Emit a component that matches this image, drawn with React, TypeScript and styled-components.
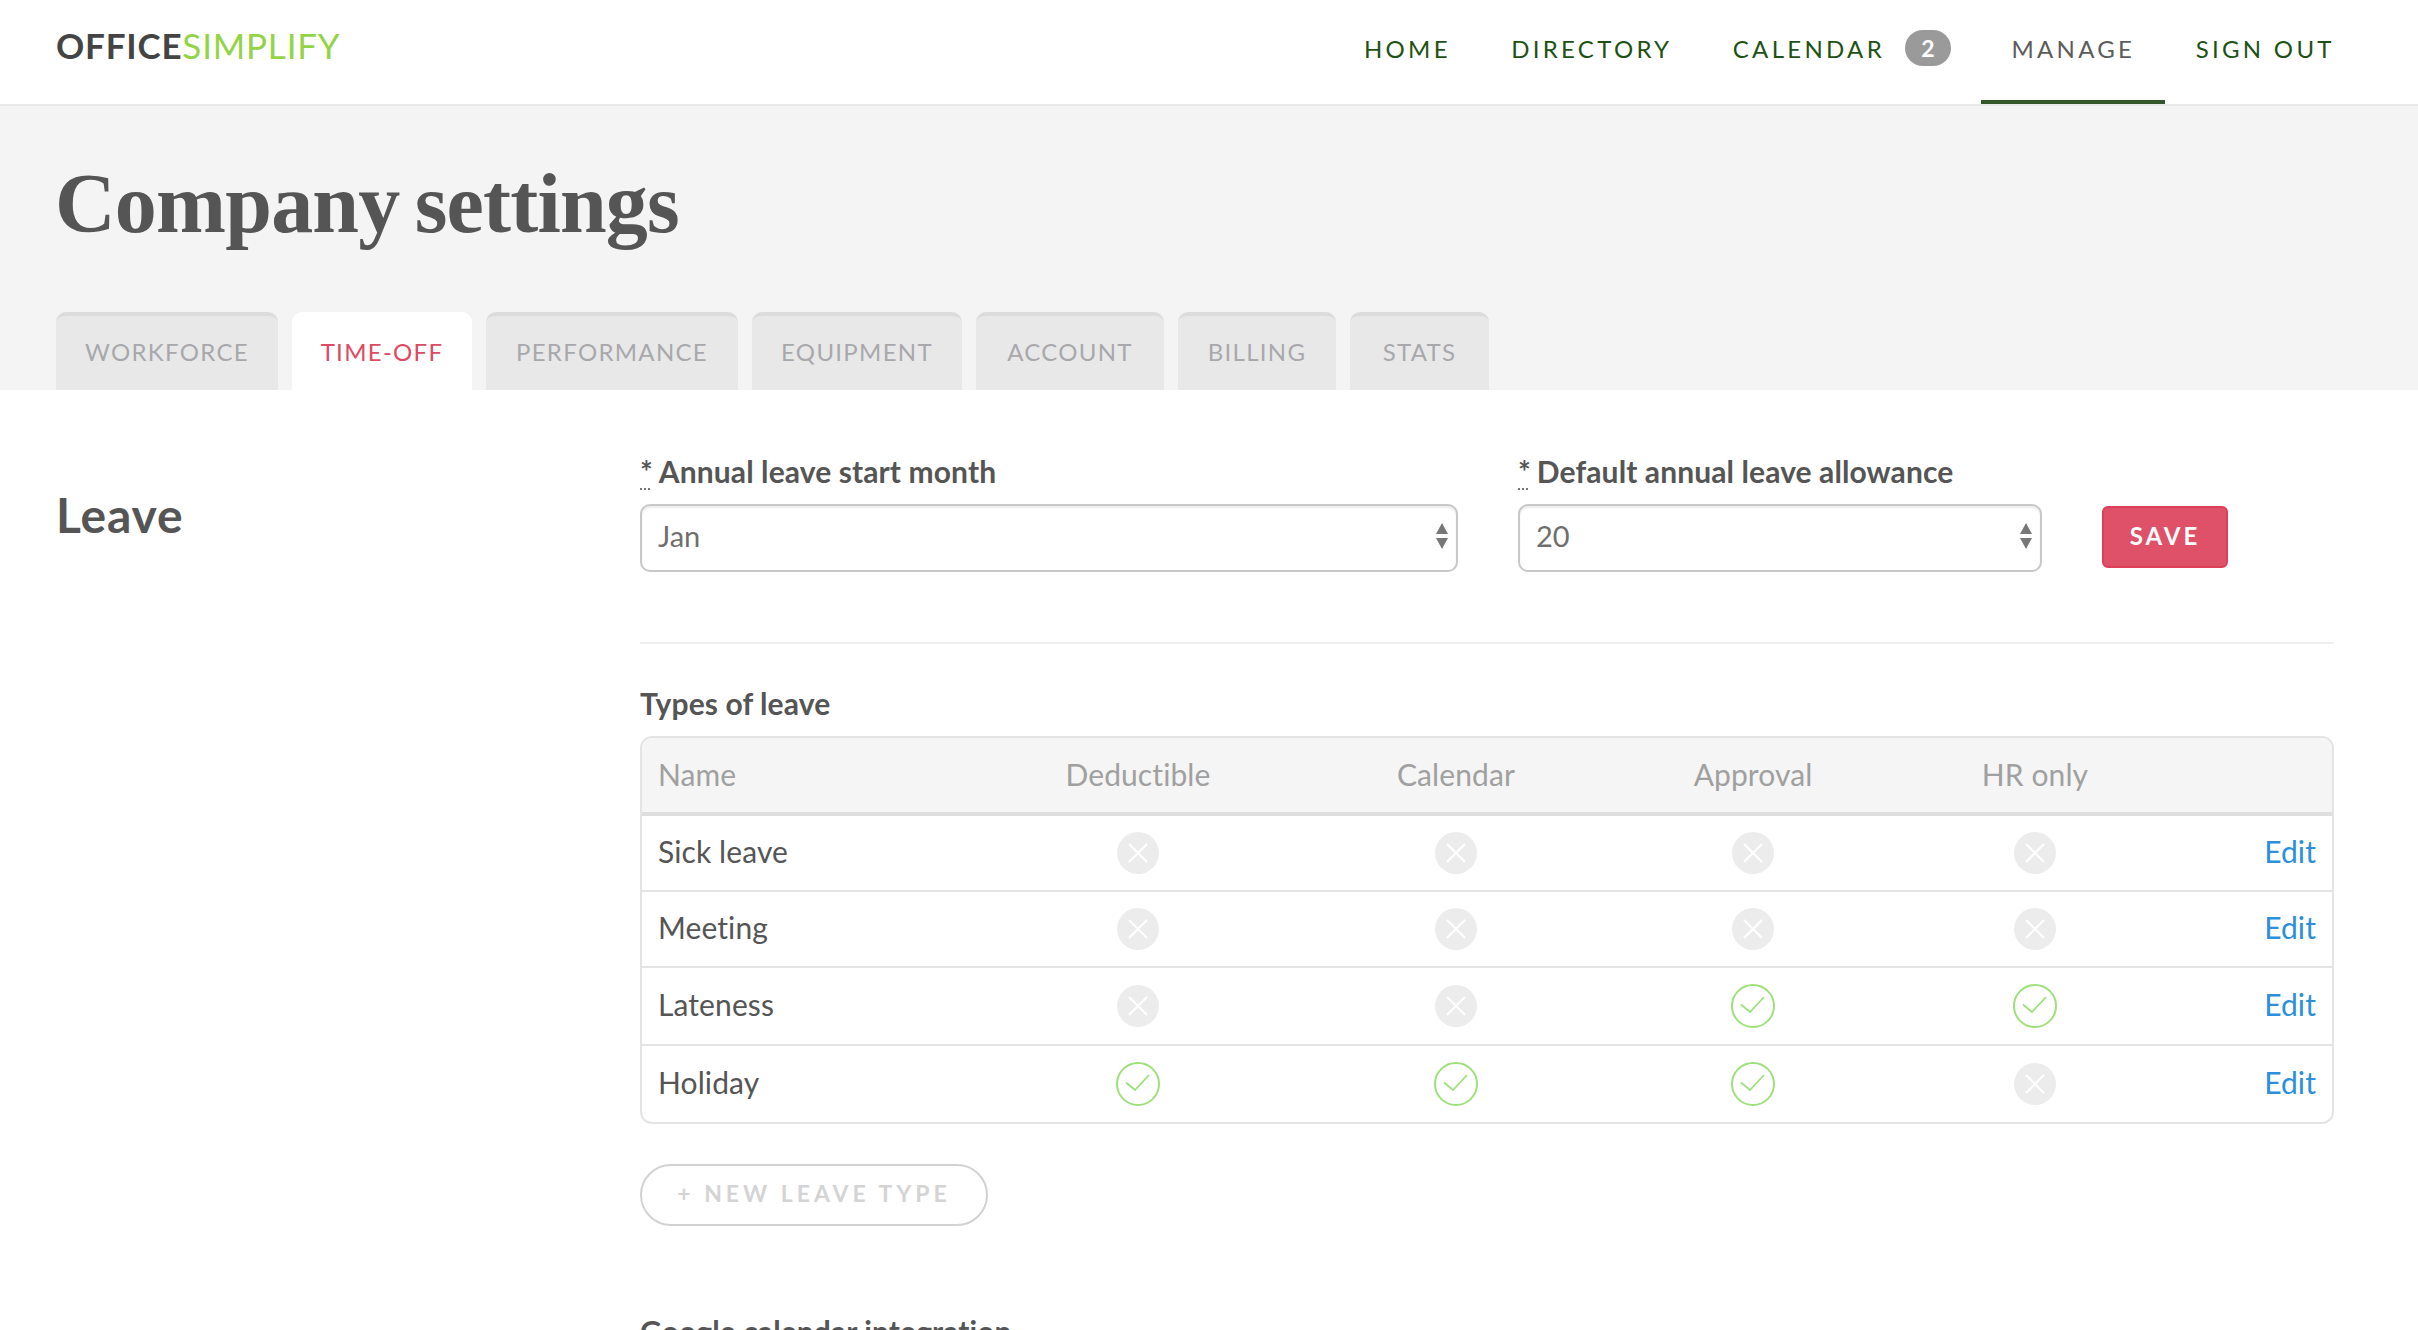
import React, { FC } from 'react';
import styled, { createGlobalStyle } from 'styled-components';

const GlobalStyle = createGlobalStyle`
  html, body {
    margin: 0;
    padding: 0;
    background: #fff;
    overflow: hidden;
  }
  body {
    font-family: Lato, "Liberation Sans", sans-serif;
    color: #555;
  }
  * {
    box-sizing: border-box;
  }
`;

const Page = styled.div`
  width: 2418px;
  height: 1330px;
  overflow: hidden;
`;

const Header = styled.header`
  display: flex;
  justify-content: space-between;
  height: 106px;
  padding: 0 56px;
  background: #fff;
  border-bottom: 2px solid #e8e8e8;
`;

const Logo = styled.div`
  padding-top: 23px;
  font-size: 35px;
  line-height: 44px;
  font-weight: 700;
  letter-spacing: 0.8px;
  color: #444;

  span {
    font-weight: 400;
    color: #93d447;
  }
`;

const Nav = styled.nav`
  display: flex;
  margin-right: -3px;
`;

const NavItem = styled.a<{ $active?: boolean }>`
  display: flex;
  align-items: flex-start;
  height: 104px;
  padding: 34px 30.2px 0;
  font-size: 24px;
  line-height: 30px;
  letter-spacing: 3.3px;
  color: ${(p) => (p.$active ? '#5c5c5c' : '#1d5214')};
  border-bottom: 4px solid ${(p) => (p.$active ? '#33562b' : 'transparent')};
`;

const Badge = styled.span`
  display: block;
  width: 46px;
  height: 36px;
  margin: -4px 0 0 20px;
  border-radius: 18px;
  background: #9a9a9a;
  color: #fff;
  font-size: 23px;
  line-height: 36px;
  font-weight: 700;
  letter-spacing: 0;
  text-align: center;
`;

const Hero = styled.section`
  height: 284px;
  padding: 0 56px;
  background: #f4f4f4;
  overflow: hidden;
`;

const Title = styled.h1`
  margin: 0 0 0 -1px;
  padding-top: 48px;
  height: 206px;
  font-family: "Liberation Serif", serif;
  font-size: 84px;
  line-height: 100px;
  font-weight: 700;
  letter-spacing: -0.8px;
  word-spacing: -5px;
  color: #555;
`;

const Tabs = styled.div`
  display: flex;
  gap: 14px;
`;

const Tab = styled.a<{ $active?: boolean; $width: number }>`
  display: block;
  width: ${(p) => p.$width}px;
  height: 78px;
  border-top: 4px solid ${(p) => (p.$active ? '#fff' : '#dcdcdc')};
  border-radius: 10px 10px 0 0;
  background: ${(p) => (p.$active ? '#fff' : '#e8e8e8')};
  color: ${(p) => (p.$active ? '#dd4a63' : '#a8a8ac')};
  font-size: 24px;
  line-height: 72px;
  letter-spacing: 1.3px;
  text-align: center;
`;

const Main = styled.main`
  display: grid;
  grid-template-columns: 584px 1694px;
  padding: 0 56px;
`;

const SectionTitle = styled.h2`
  margin: 0;
  padding-top: 95px;
  font-size: 48px;
  line-height: 60px;
  font-weight: 700;
  letter-spacing: 0.8px;
  color: #555;
`;

const Fields = styled.div`
  display: flex;
  align-items: flex-start;
  padding-top: 63px;
  height: 254px;
  border-bottom: 2px solid #efefef;
`;

const Field = styled.div<{ $width: number }>`
  width: ${(p) => p.$width}px;
  margin-right: 60px;
`;

const FieldLabel = styled.label`
  display: block;
  height: 51px;
  font-size: 30px;
  line-height: 36px;
  font-weight: 700;
  letter-spacing: 0.1px;
  color: #555;
`;

const Required = styled.abbr`
  margin-right: 6px;
  text-decoration: underline dotted #777 2px;
  text-underline-offset: 5px;
`;

const SelectWrap = styled.div`
  position: relative;
`;

const Select = styled.select`
  display: block;
  width: 100%;
  height: 68px;
  padding: 0 16px 6px;
  border: 2px solid #c8c8c8;
  border-radius: 10px;
  box-shadow: inset 0 2px 2px rgba(0, 0, 0, 0.08);
  background: #fff;
  appearance: none;
  font-family: inherit;
  font-size: 29px;
  color: #6e6e6e;
`;

const SelectArrows = styled.svg`
  position: absolute;
  top: 18px;
  right: 9px;
  width: 14px;
  height: 28px;
`;

const SaveButton = styled.button`
  width: 126px;
  height: 62px;
  margin-top: 53px;
  padding: 0 0 4px;
  border: 2px solid #dd3f58;
  border-radius: 6px;
  background: #df5069;
  color: #fff;
  font-family: inherit;
  font-size: 24px;
  font-weight: 700;
  letter-spacing: 3px;
`;

const Subheading = styled.h3`
  margin: 0;
  padding-top: 41px;
  height: 92px;
  font-size: 30px;
  line-height: 36px;
  font-weight: 700;
  letter-spacing: 0.1px;
  color: #555;
`;

const Table = styled.div`
  width: 1694px;
  border: 2px solid #e4e4e4;
  border-radius: 12px;
  overflow: hidden;
`;

const columns = '358px 276px 360px 234px 330px 1fr';

const HeadRow = styled.div`
  display: grid;
  grid-template-columns: ${columns};
  align-items: center;
  height: 78px;
  padding-bottom: 3px;
  background: #f5f5f5;
  border-bottom: 4px solid #dedede;
  font-size: 30px;
  letter-spacing: 0.1px;
  color: #a0a0a0;
`;

const Row = styled.div`
  display: grid;
  grid-template-columns: ${columns};
  align-items: center;
  padding: 16px 0;
  border-bottom: 2px solid #e4e4e4;
  font-size: 30px;
  letter-spacing: 0.1px;
  color: #555;

  &:last-child {
    border-bottom: 0;
  }
`;

const HeadName = styled.div`
  padding-left: 16px;
`;

const RowName = styled.div`
  padding: 0 0 4px 16px;
`;

const CenterCell = styled.div`
  display: flex;
  justify-content: center;
`;

const EditLink = styled.a`
  padding: 0 16px 4px 0;
  text-align: right;
  color: #2b8fdc;
`;

const NewTypeButton = styled.button`
  display: block;
  width: 348px;
  height: 62px;
  margin-top: 40px;
  padding: 0 0 4px;
  border: 2px solid #d2d2d2;
  border-radius: 31px;
  background: #fff;
  color: #d4d4d4;
  font-family: inherit;
  font-size: 23px;
  font-weight: 700;
  letter-spacing: 4px;
`;

const NextHeading = styled.h3`
  margin: 0;
  padding-top: 87px;
  font-size: 30px;
  line-height: 36px;
  font-weight: 700;
  letter-spacing: 0.1px;
  color: #555;
`;

const Arrows: FC = () => (
  <SelectArrows viewBox="0 0 14 28">
    <path d="M7 1 L13 12 H1 Z" fill="#777" />
    <path d="M7 27 L13 16 H1 Z" fill="#777" />
  </SelectArrows>
);

const StatusIcon: FC<{ on: boolean }> = ({ on }) =>
  on ? (
    <svg width="44" height="44" viewBox="0 0 44 44">
      <circle cx="22" cy="22" r="21" fill="#fff" stroke="#9ee07a" strokeWidth="2" />
      <path d="M10 20.5 L19 28 L33 13" fill="none" stroke="#9ee07a" strokeWidth="1.8" />
    </svg>
  ) : (
    <svg width="42" height="42" viewBox="0 0 42 42">
      <circle cx="21" cy="21" r="21" fill="#ececec" />
      <path d="M12 12 L30 30 M30 12 L12 30" fill="none" stroke="#fff" strokeWidth="2.2" />
    </svg>
  );

const tabs = [
  { label: 'WORKFORCE', width: 222 },
  { label: 'TIME-OFF', width: 180 },
  { label: 'PERFORMANCE', width: 252 },
  { label: 'EQUIPMENT', width: 210 },
  { label: 'ACCOUNT', width: 188 },
  { label: 'BILLING', width: 158 },
  { label: 'STATS', width: 139 },
];

const leaveTypes = [
  { name: 'Sick leave', flags: [false, false, false, false] },
  { name: 'Meeting', flags: [false, false, false, false] },
  { name: 'Lateness', flags: [false, false, true, true] },
  { name: 'Holiday', flags: [true, true, true, false] },
];

export default function App() {
  return (
    <Page>
      <GlobalStyle />
      <Header>
        <Logo>
          OFFICE<span>SIMPLIFY</span>
        </Logo>
        <Nav>
          <NavItem>HOME</NavItem>
          <NavItem>DIRECTORY</NavItem>
          <NavItem>
            CALENDAR<Badge>2</Badge>
          </NavItem>
          <NavItem $active>MANAGE</NavItem>
          <NavItem>SIGN OUT</NavItem>
        </Nav>
      </Header>
      <Hero>
        <Title>Company settings</Title>
        <Tabs>
          {tabs.map((t) => (
            <Tab key={t.label} $width={t.width} $active={t.label === 'TIME-OFF'}>
              {t.label}
            </Tab>
          ))}
        </Tabs>
      </Hero>
      <Main>
        <SectionTitle>Leave</SectionTitle>
        <div>
          <Fields>
            <Field $width={818}>
              <FieldLabel>
                <Required title="required">*</Required>Annual leave start month
              </FieldLabel>
              <SelectWrap>
                <Select defaultValue="Jan">
                  <option>Jan</option>
                </Select>
                <Arrows />
              </SelectWrap>
            </Field>
            <Field $width={524}>
              <FieldLabel>
                <Required title="required">*</Required>Default annual leave allowance
              </FieldLabel>
              <SelectWrap>
                <Select defaultValue="20">
                  <option>20</option>
                </Select>
                <Arrows />
              </SelectWrap>
            </Field>
            <SaveButton>SAVE</SaveButton>
          </Fields>
          <Subheading>Types of leave</Subheading>
          <Table>
            <HeadRow>
              <HeadName>Name</HeadName>
              <CenterCell>Deductible</CenterCell>
              <CenterCell>Calendar</CenterCell>
              <CenterCell>Approval</CenterCell>
              <CenterCell>HR only</CenterCell>
            </HeadRow>
            {leaveTypes.map((l) => (
              <Row key={l.name}>
                <RowName>{l.name}</RowName>
                {l.flags.map((f, i) => (
                  <CenterCell key={i}>
                    <StatusIcon on={f} />
                  </CenterCell>
                ))}
                <EditLink>Edit</EditLink>
              </Row>
            ))}
          </Table>
          <NewTypeButton>+ NEW LEAVE TYPE</NewTypeButton>
          <NextHeading>Google calendar integration</NextHeading>
        </div>
      </Main>
    </Page>
  );
}
